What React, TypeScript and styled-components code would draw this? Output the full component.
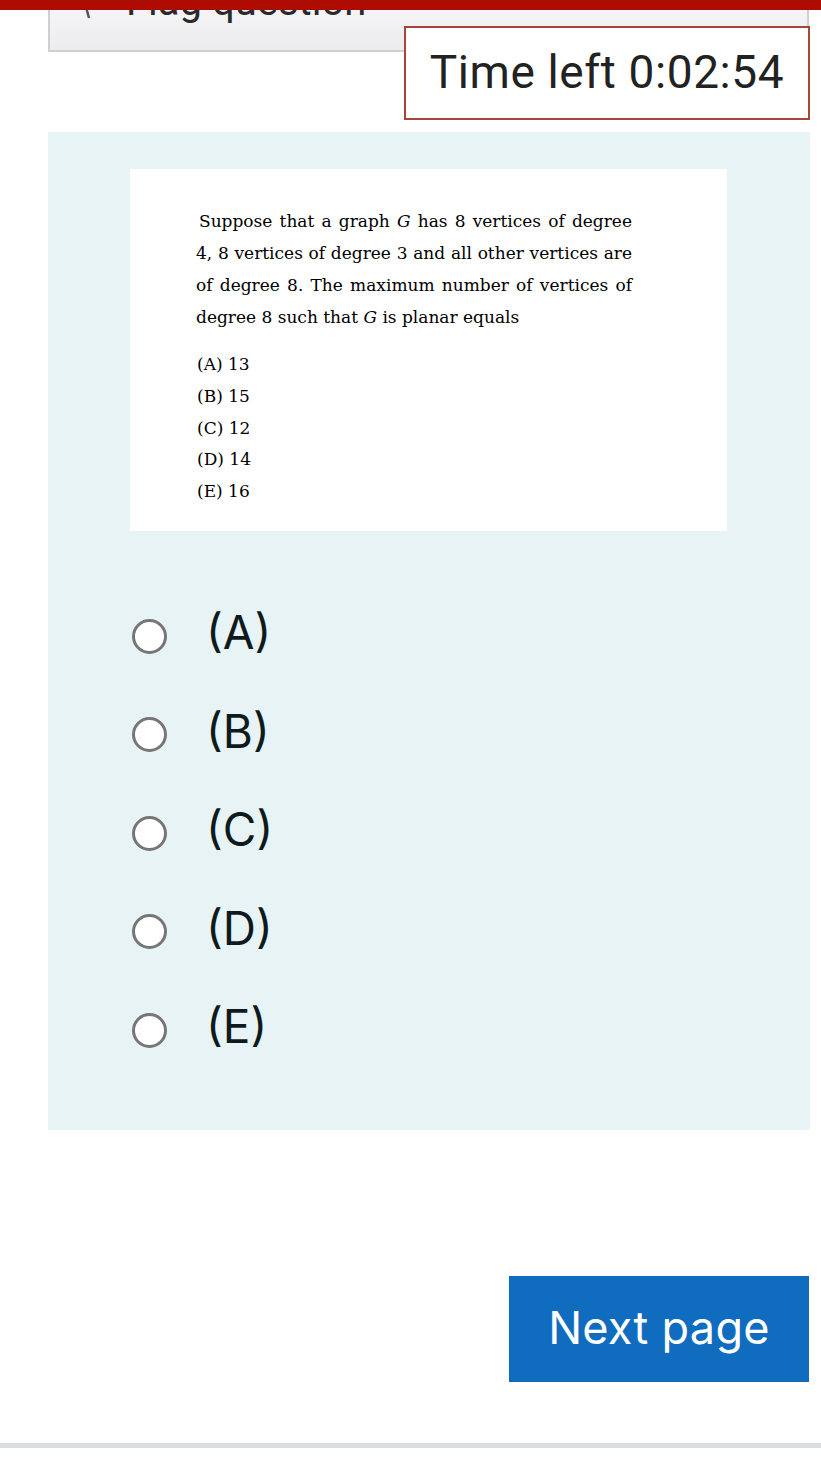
import styled, { createGlobalStyle } from 'styled-components';

const GlobalStyle = createGlobalStyle`
  html, body {
    margin: 0;
    padding: 0;
    background: #ffffff;
    overflow: hidden;
  }
  * { box-sizing: border-box; }
`;

/* ── Header strip ── */
const TopBar = styled.div`
  position: fixed;
  top: 0;
  left: 0;
  right: 0;
  height: 10px;
  background: #ae0c00;
  z-index: 10;
`;

const Page = styled.div`
  width: 821px;
  height: 1459px;
  padding: 0 11px 0 48px;
  display: flex;
  flex-direction: column;
  font-family: Roboto, "Liberation Sans", sans-serif;
`;

const FlagBox = styled.div`
  margin-top: -40px;
  height: 92px;
  width: 761px;
  border: 2px solid #cfcfd2;
  border-top: none;
  background: linear-gradient(#ffffff, #ececef);
  display: flex;
  align-items: flex-start;
  gap: 28px;
  padding: 22px 0 0 30px;
  font-size: 40px;
  line-height: 40px;
  color: #2a2a2a;
  overflow: hidden;
`;

const FlagIcon = styled.svg`
  width: 18px;
  height: 40px;
  flex: none;
`;

const Timer = styled.div`
  align-self: flex-end;
  margin-top: -26px;
  position: relative;
  width: 406px;
  height: 94px;
  border: 2px solid #a9443a;
  background: #ffffff;
  display: flex;
  align-items: center;
  justify-content: center;
  font-size: 46px;
  color: #222222;
  letter-spacing: 0.6px;
  padding-bottom: 2px;
`;

/* ── Question panel ── */
const Panel = styled.section`
  margin-top: 12px;
  width: 762px;
  height: 998px;
  background: #e7f3f5;
  padding: 37px 0 0 82px;
`;

const QuestionImage = styled.div`
  width: 597px;
  height: 362px;
  background: #ffffff;
  padding: 36px 0 0 66px;
  font-family: "DejaVu Serif", "Liberation Serif", serif;
  font-size: 17px;
  color: #000000;
`;

const Paragraph = styled.div`
  width: 436px;
`;

const Line = styled.div<{ $last?: boolean; $indent?: number }>`
  line-height: 32px;
  text-align: justify;
  text-align-last: ${p => (p.$last ? 'left' : 'justify')};
  padding-left: ${p => p.$indent ?? 0}px;
  white-space: nowrap;
`;

const Options = styled.div`
  margin-top: 16px;
  padding-left: 1px;
`;

const OptionLine = styled.div`
  line-height: 31.75px;
`;

const Answers = styled.div`
  margin-top: 56px;
  margin-left: 2px;
  display: flex;
  flex-direction: column;
`;

const AnswerRow = styled.label`
  height: 98.5px;
  display: flex;
  align-items: center;
  gap: 39px;
  cursor: pointer;
`;

const Radio = styled.span`
  width: 35px;
  height: 35px;
  border-radius: 50%;
  border: 3px solid #767676;
  background: #ffffff;
  flex: none;
`;

const AnswerText = styled.span`
  font-family: Inter, "Noto Sans", sans-serif;
  font-size: 46px;
  line-height: 50px;
  color: #0e1a1c;
  margin-top: -8px;
`;

/* ── Footer ── */
const NextRow = styled.div`
  margin-top: 146px;
  display: flex;
  justify-content: flex-end;
  padding-right: 1px;
`;

const NextButton = styled.button`
  width: 300px;
  height: 106px;
  border: none;
  background: #0f6cbf;
  color: #ffffff;
  font-family: Inter, "Noto Sans", sans-serif;
  font-size: 45px;
  letter-spacing: 0.3px;
  cursor: pointer;
  padding: 0 0 4px;
`;

const BottomRule = styled.div`
  margin: 61px -11px 0 -48px;
  height: 5px;
  background: #dadfe3;
`;

const options = [
  ['(A)', '13'],
  ['(B)', '15'],
  ['(C)', '12'],
  ['(D)', '14'],
  ['(E)', '16'],
];

export default function App() {
  return (
    <>
      <GlobalStyle />
      <TopBar />
      <Page>
        <FlagBox>
          <FlagIcon viewBox="0 0 18 40">
            <path d="M2 10 L9 36" stroke="#555" strokeWidth="2.5" fill="none" />
          </FlagIcon>
          <span>Flag question</span>
        </FlagBox>

        <Timer>Time left 0:02:54</Timer>

        <Panel>
          <QuestionImage>
            <Paragraph>
              <Line $indent={3}>
                Suppose that a graph <i>G</i> has 8 vertices of degree
              </Line>
              <Line>4, 8 vertices of degree 3 and all other vertices are</Line>
              <Line>of degree 8. The maximum number of vertices of</Line>
              <Line $last>
                degree 8 such that <i>G</i> is planar equals
              </Line>
            </Paragraph>
            <Options>
              {options.map(([k, v]) => (
                <OptionLine key={k}>
                  {k} {v}
                </OptionLine>
              ))}
            </Options>
          </QuestionImage>

          <Answers>
            {options.map(([k]) => (
              <AnswerRow key={k}>
                <Radio />
                <AnswerText>{k}</AnswerText>
              </AnswerRow>
            ))}
          </Answers>
        </Panel>

        <NextRow>
          <NextButton>Next page</NextButton>
        </NextRow>

        <BottomRule />
      </Page>
    </>
  );
}
